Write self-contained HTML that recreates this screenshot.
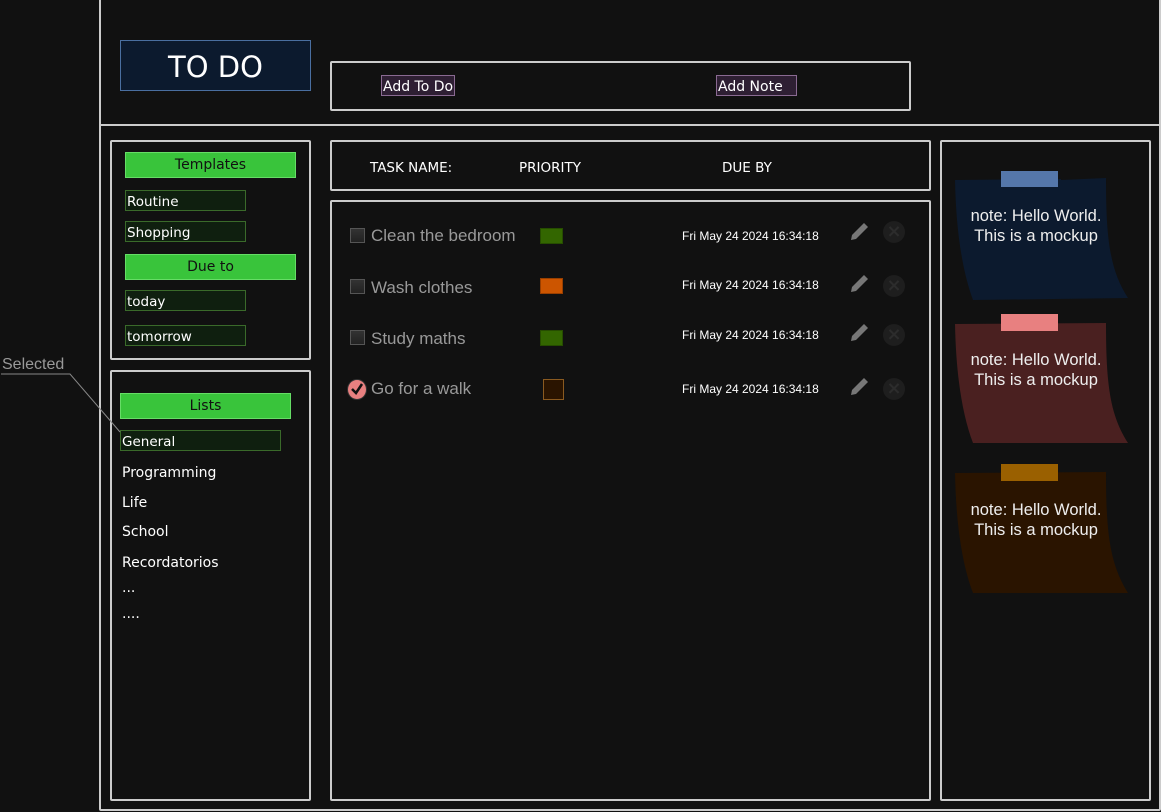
<!DOCTYPE html>
<html><head><meta charset="utf-8"><style>
*{margin:0;padding:0;box-sizing:border-box}
body{width:1161px;height:812px;background:#111;position:relative;overflow:hidden;font-family:"DejaVu Sans","Liberation Sans",sans-serif;color:#eee}
.a{position:absolute}
.bx{position:absolute;border:2px solid #ccc;border-radius:2px}
.g{position:absolute;background:#39c43b;border:1px solid #6d6;color:#111;font-size:14px;text-align:center;line-height:24px}
.it{position:absolute;background:#0f1f0f;border:1px solid #3a6a2a;font-size:13.5px;line-height:23px;padding-left:1px;color:#fff}
.li{position:absolute;left:122px;font-size:14px;color:#fff}
.t{position:absolute;font-family:"Liberation Sans",sans-serif;font-size:17px;color:#999}
.cb{position:absolute;left:350px;width:15px;height:15px;border:1px solid #555;background:linear-gradient(#333,#222)}
.pr{position:absolute;left:540px;width:23px;height:16px}
.d{position:absolute;left:682px;font-family:"Liberation Sans",sans-serif;font-size:12px;color:#fff}
.x{position:absolute;left:883px;width:22px;height:22px;border-radius:50%;background:#1e1e1e;color:#2c2c2c;font-size:18px;text-align:center;line-height:22px;font-weight:bold}
.nt{position:absolute;left:955px;font-family:"Liberation Sans",sans-serif;font-size:16.5px;color:#eee;text-align:center;width:150px;line-height:20px}
.hd{position:absolute;top:160px;font-size:13.5px;color:#fff}
</style></head><body>
<div class="bx" style="left:99px;top:-2px;width:1062px;height:813px"></div>
<div class="a" style="left:100px;top:124px;width:1060px;height:2px;background:#ccc"></div>
<div class="a" style="left:120px;top:40px;width:191px;height:51px;background:#0c1a2e;border:1px solid #4a6fa0;font-size:29px;text-align:center;line-height:52px;color:#fff">TO DO</div>
<div class="bx" style="left:330px;top:61px;width:581px;height:50px"></div>
<div class="a" style="left:381px;top:75px;width:74px;height:21px;background:#2e1f33;border:1px solid #8a6a92;font-size:14px;line-height:23px;color:#fff;padding-left:1px;white-space:nowrap">Add To Do</div>
<div class="a" style="left:716px;top:75px;width:81px;height:21px;background:#2e1f33;border:1px solid #8a6a92;font-size:14px;line-height:23px;color:#fff;padding-left:1px">Add Note</div>

<div class="bx" style="left:110px;top:140px;width:201px;height:220px"></div>
<div class="g" style="left:125px;top:152px;width:171px;height:26px">Templates</div>
<div class="it" style="left:125px;top:190px;width:121px;height:21px">Routine</div>
<div class="it" style="left:125px;top:221px;width:121px;height:21px">Shopping</div>
<div class="g" style="left:125px;top:254px;width:171px;height:26px">Due to</div>
<div class="it" style="left:125px;top:290px;width:121px;height:21px">today</div>
<div class="it" style="left:125px;top:325px;width:121px;height:21px">tomorrow</div>

<div class="bx" style="left:110px;top:370px;width:201px;height:431px"></div>
<div class="g" style="left:120px;top:393px;width:171px;height:26px">Lists</div>
<div class="it" style="left:120px;top:430px;width:161px;height:21px">General</div>
<div class="li" style="top:465px">Programming</div>
<div class="li" style="top:495px">Life</div>
<div class="li" style="top:524px">School</div>
<div class="li" style="top:555px">Recordatorios</div>
<div class="li" style="top:580px">...</div>
<div class="li" style="top:606px">....</div>
<div class="a" style="left:2px;top:356px;font-family:'Liberation Sans',sans-serif;font-size:16px;color:#999">Selected</div>
<svg class="a" style="left:0;top:0" width="130" height="440"><path d="M1 374H70L120 432" stroke="#888" fill="none" stroke-width="1"/></svg>

<div class="bx" style="left:330px;top:140px;width:601px;height:51px"></div>
<div class="hd" style="left:370px">TASK NAME:</div>
<div class="hd" style="left:519px">PRIORITY</div>
<div class="hd" style="left:722px">DUE BY</div>

<div class="bx" style="left:330px;top:200px;width:601px;height:601px"></div>
<div class="cb" style="top:228px"></div><div class="t" style="left:371px;top:226px">Clean the bedroom</div>
<div class="pr" style="top:228px;background:#336600;border:1px solid #264d00"></div>
<div class="d" style="top:229px">Fri May 24 2024 16:34:18</div>
<div class="cb" style="top:279px"></div><div class="t" style="left:371px;top:278px">Wash clothes</div>
<div class="pr" style="top:278px;background:#cc5500;border:1px solid #993f00"></div>
<div class="d" style="top:278px">Fri May 24 2024 16:34:18</div>
<div class="cb" style="top:330px"></div><div class="t" style="left:371px;top:329px">Study maths</div>
<div class="pr" style="top:330px;background:#336600;border:1px solid #264d00"></div>
<div class="d" style="top:328px">Fri May 24 2024 16:34:18</div>
<div class="a" style="left:347px;top:379px;width:20px;height:21px;border-radius:50%;background:#e88080;border:1px solid #333"></div>
<svg class="a" style="left:349px;top:381px" width="16" height="16"><path d="M3 8L7 12L13 3" stroke="#111" stroke-width="2.5" fill="none"/></svg>
<div class="t" style="left:371px;top:379px">Go for a walk</div>
<div class="pr" style="left:543px;top:379px;width:21px;height:21px;background:#2a1400;border:1px solid #8a5a20"></div>
<div class="d" style="top:382px">Fri May 24 2024 16:34:18</div>
<svg class="a" style="left:848px;top:220px" width="26" height="190" fill="#777">
<g id="p"><path d="M3 20L4 15L16 3L20 7L8 19Z"/></g>
<use href="#p" y="52"/><use href="#p" y="101"/><use href="#p" y="155"/>
</svg>
<div class="x" style="top:221px">×</div><div class="x" style="top:275px">×</div><div class="x" style="top:324px">×</div><div class="x" style="top:378px">×</div>

<div class="bx" style="left:940px;top:140px;width:211px;height:661px"></div>
<svg class="a" style="left:940px;top:160px" width="210" height="450">
<path d="M15 20L121 19L121 20L166 18C166 80 170 110 188 138L33 140C22 110 16 70 15 20Z" fill="#0c1a2e"/>
<rect x="61" y="11" width="57" height="16" fill="#5577aa"/>
<path d="M15 164L166 163C166 225 170 255 188 283L33 283C22 254 16 214 15 164Z" fill="#4a2020"/>
<rect x="61" y="154" width="57" height="17" fill="#e88080"/>
<path d="M15 313L166 312C166 374 170 404 188 433L33 433C22 404 16 364 15 313Z" fill="#2a1400"/>
<rect x="61" y="304" width="57" height="17" fill="#9a6000"/>
</svg>
<div class="nt" style="left:961px;top:206px">note: Hello World.<br>This is a mockup</div>
<div class="nt" style="left:961px;top:350px">note: Hello World.<br>This is a mockup</div>
<div class="nt" style="left:961px;top:500px">note: Hello World.<br>This is a mockup</div>
</body></html>
